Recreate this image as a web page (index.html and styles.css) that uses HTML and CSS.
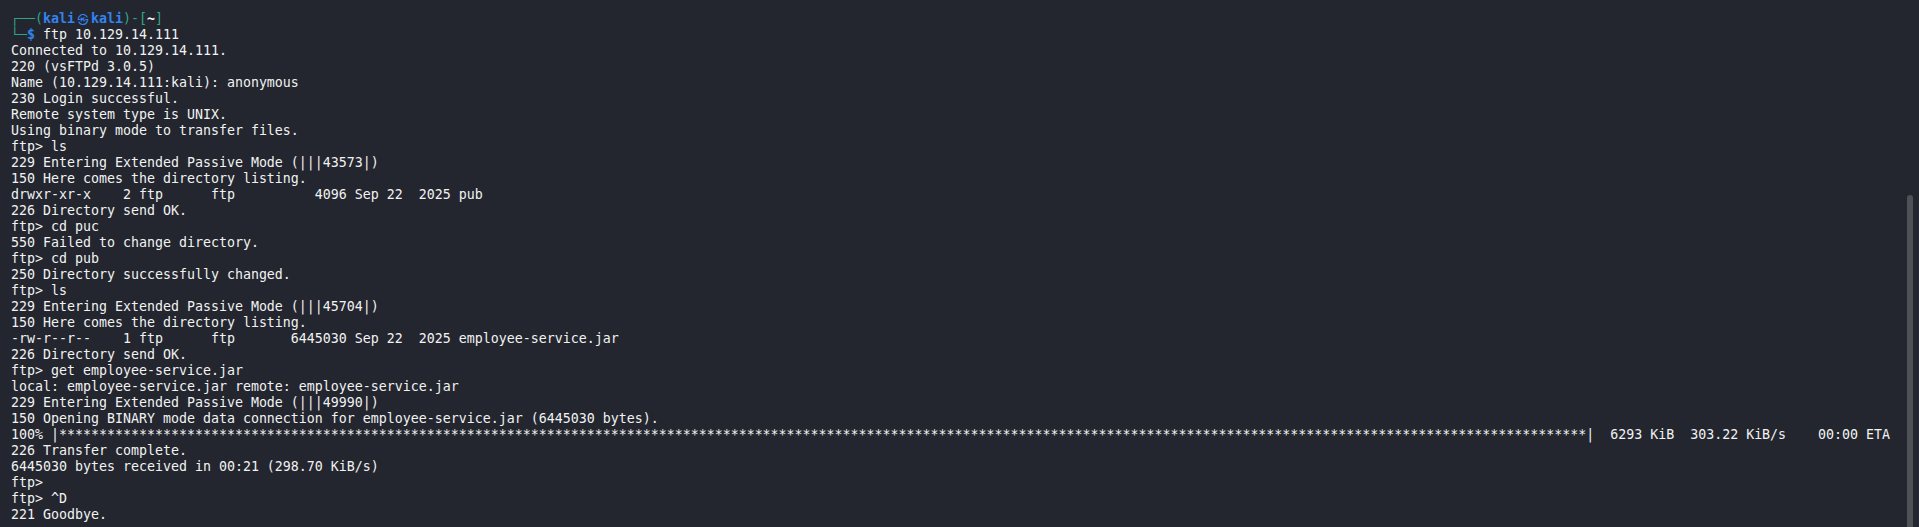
FILE: index.html
```html
<!DOCTYPE html>
<html lang="en">
<head>
<meta charset="utf-8">
<title>Terminal</title>
<link rel="stylesheet" href="styles.css">
</head>
<body>
<div class="term">
<pre class="out"><span class="g box">┌──</span><span class="g">(</span><span class="b">kali<span class="at">㉿</span>kali</span><span class="g">)-[</span><span class="w">~</span><span class="g">]</span>
<span class="g box">└─</span><span class="b">$</span> ftp 10.129.14.111
Connected to 10.129.14.111.
220 (vsFTPd 3.0.5)
Name (10.129.14.111:kali): anonymous
230 Login successful.
Remote system type is UNIX.
Using binary mode to transfer files.
ftp&gt; ls
229 Entering Extended Passive Mode (|||43573|)
150 Here comes the directory listing.
drwxr-xr-x    2 ftp      ftp          4096 Sep 22  2025 pub
226 Directory send OK.
ftp&gt; cd puc
550 Failed to change directory.
ftp&gt; cd pub
250 Directory successfully changed.
ftp&gt; ls
229 Entering Extended Passive Mode (|||45704|)
150 Here comes the directory listing.
-rw-r--r--    1 ftp      ftp       6445030 Sep 22  2025 employee-service.jar
226 Directory send OK.
ftp&gt; get employee-service.jar
local: employee-service.jar remote: employee-service.jar
229 Entering Extended Passive Mode (|||49990|)
150 Opening BINARY mode data connection for employee-service.jar (6445030 bytes).
100% |***********************************************************************************************************************************************************************************************|  6293 KiB  303.22 KiB/s    00:00 ETA
226 Transfer complete.
6445030 bytes received in 00:21 (298.70 KiB/s)
ftp&gt; 
ftp&gt; ^D
221 Goodbye.</pre>
<div class="scroll"><div class="thumb"></div></div>
</div>
</body>
</html>
```
FILE: styles.css
```css
html, body {
  margin: 0;
  padding: 0;
  background: #23262e;
  height: 527px;
  overflow: hidden;
}
.term {
  display: flex;
  height: 527px;
}
.out {
  flex: 1;
  margin: 0;
  padding: 11px 0 0 11px;
  font-family: "DejaVu Sans Mono", "Liberation Mono", monospace;
  font-size: 13.29px;
  line-height: 16px;
  color: #f2f2f2;
  white-space: pre;
  overflow: hidden;
}
.g { color: #2fa587; }
.box {
  display: inline-block;
  height: 16px;
  line-height: 16px;
  vertical-align: top;
}
.b { color: #3284f0; font-weight: bold; }
.w { color: #ffffff; font-weight: bold; }
.at {
  display: inline-block;
  width: 16px;
  text-align: center;
  font-family: "Noto Sans CJK KR", "DejaVu Sans", sans-serif;
  font-weight: normal;
  font-size: 11px;
  line-height: 16px;
  vertical-align: top;
}
.scroll {
  width: 12px;
  flex: none;
  display: flex;
  flex-direction: column;
}
.thumb {
  margin-top: 195px;
  width: 6px;
  flex: 1;
  background: #4f5157;
  border-radius: 3px 3px 0 0;
}
```
